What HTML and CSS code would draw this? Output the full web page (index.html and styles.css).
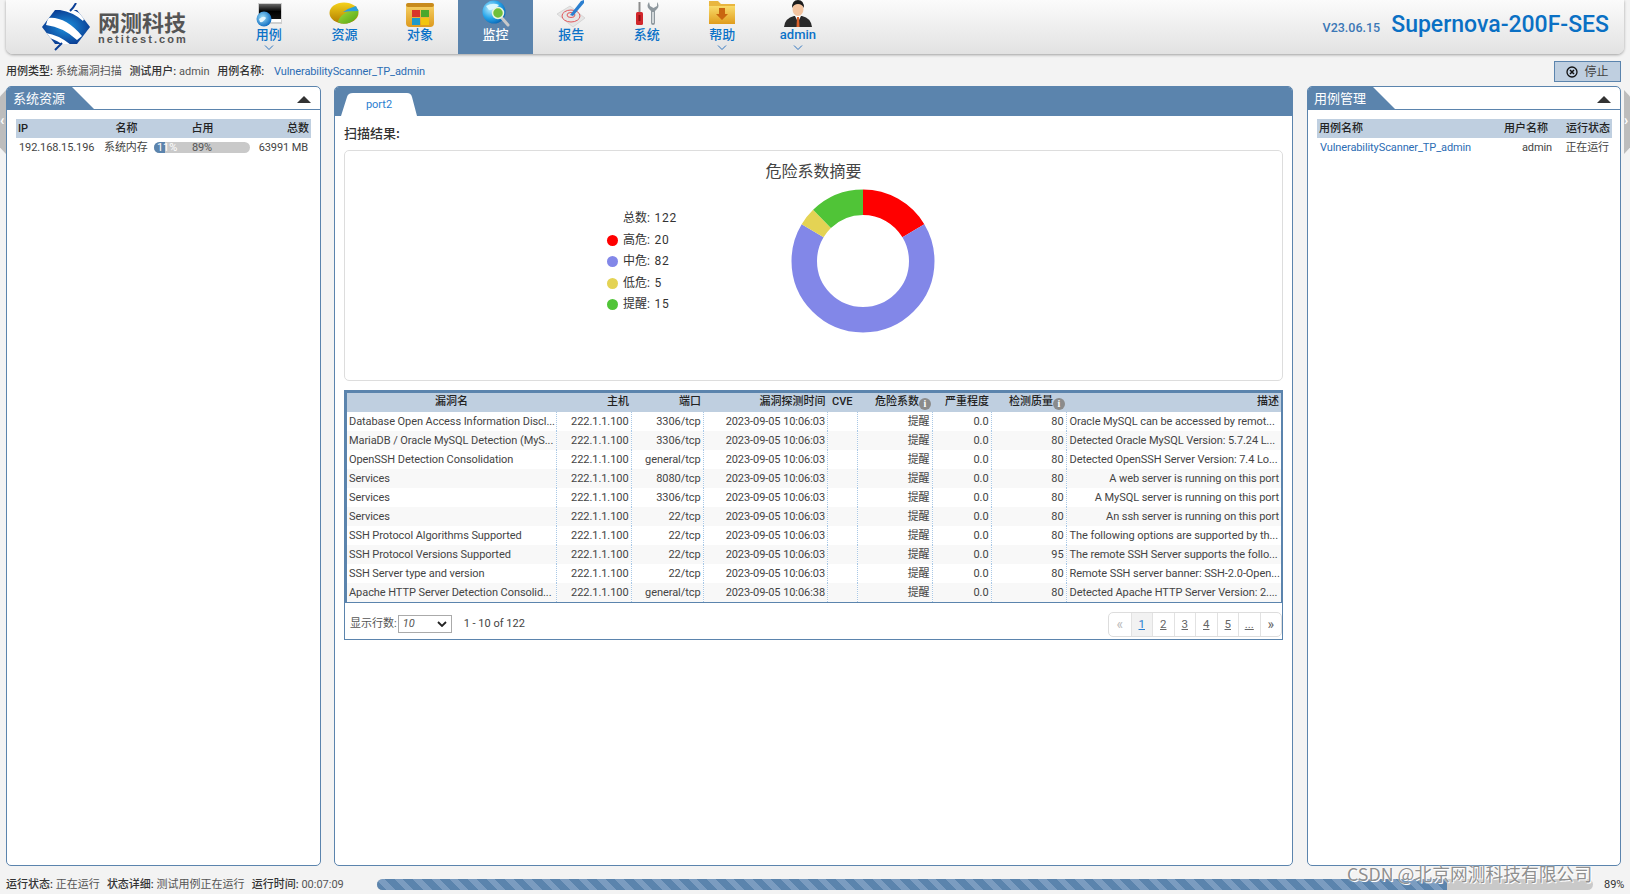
FILE: index.html
```html
<!DOCTYPE html>
<html lang="zh">
<head>
<meta charset="utf-8">
<title>Supernova-200F-SES</title>
<link rel="stylesheet" href="styles.css">
</head>
<body>
<header class="topbar">
  <div class="logo">
    <svg class="logo-mark" viewBox="0 0 50 48" width="50" height="48">
      <defs>
        <radialGradient id="lg" cx="50%" cy="50%" r="55%"><stop offset="0" stop-color="#1c93e0"/><stop offset="1" stop-color="#0a3a90"/></radialGradient>
        <clipPath id="hex"><path d="M14 7 L36 7 L49 24 L36 41 L14 41 L1 24 Z"/></clipPath>
      </defs>
      <path d="M14 7 L36 7 L49 24 L36 41 L14 41 L1 24 Z" fill="url(#lg)"/>
      <g clip-path="url(#hex)" fill="#fff">
        <path d="M7 15 Q24 13 41 33 L36 37 Q22 24 5 22 Z"/>
        <path d="M19 7 Q32 9 42 18 L44 14 Q36 8 30 6 Z"/>
        <path d="M5 30 Q18 32 30 42 L22 42 Q14 36 5 34 Z"/>
      </g>
      <path d="M29 8 Q33 4 35 0 M14 47 Q18 43 21 40" stroke="#0b3f96" stroke-width="2" fill="none"/>
    </svg>
    <div class="logo-text">
      <div class="logo-cn">网测科技</div>
      <div class="logo-en">netitest.com</div>
    </div>
  </div>
  <nav class="nav">
    <a class="nav-item">
      <svg class="nav-icon" viewBox="0 0 30 28" width="30" height="28">
        <defs>
          <linearGradient id="scr" x1="0" y1="0" x2="0" y2="1"><stop offset="0" stop-color="#666"/><stop offset="0.5" stop-color="#000"/><stop offset="1" stop-color="#111"/></linearGradient>
          <radialGradient id="glb" cx="40%" cy="40%" r="60%"><stop offset="0" stop-color="#9fe0fa"/><stop offset="1" stop-color="#1572c4"/></radialGradient>
        </defs>
        <rect x="4" y="3" width="24" height="21" fill="#cfcfcf"/>
        <rect x="5" y="4" width="22" height="15" fill="url(#scr)"/>
        <rect x="12" y="19" width="15" height="3" fill="#fff"/>
        <circle cx="10" cy="19" r="7.500" fill="url(#glb)"/>
        <path d="M5 19 Q10 15 12 18 Q9 23 6 22Z" fill="#e4f6fd"/>
      </svg>
      <span class="nav-label">用例</span>
      <svg class="chev" viewBox="0 0 10 5" width="10" height="5"><path d="M1 .5 L5 4.5 L9 .5" fill="none" stroke="#2f74c0"/></svg>
    </a>
    <a class="nav-item">
      <svg class="nav-icon" viewBox="0 0 30 28" width="30" height="28">
        <defs>
          <linearGradient id="py" x1="0" y1="0" x2="0" y2="1"><stop offset="0" stop-color="#f5d21a"/><stop offset="1" stop-color="#b07c00"/></linearGradient>
          <linearGradient id="pg" x1="0" y1="0" x2="1" y2="1"><stop offset="0" stop-color="#a8dc3a"/><stop offset="1" stop-color="#4fa514"/></linearGradient>
        </defs>
        <ellipse cx="15" cy="13" rx="14.500" ry="10.500" fill="url(#py)"/>
        <path d="M9 22 Q11 12 29 9 Q31 18 20 23 Q13 25 9 22Z" fill="url(#pg)"/>
        <path d="M14 12 Q20 8 27 6 L29.500 11 Q21 11 14 12Z" fill="#2a9fdc"/>
      </svg>
      <span class="nav-label">资源</span>
    </a>
    <a class="nav-item">
      <svg class="nav-icon" viewBox="0 0 30 28" width="30" height="28">
        <defs>
          <linearGradient id="fd" x1="0" y1="0" x2="0" y2="1"><stop offset="0" stop-color="#f8d56a"/><stop offset="1" stop-color="#dd9a1e"/></linearGradient>
        </defs>
        <rect x="1" y="3" width="28" height="24" rx="4" fill="url(#fd)"/>
        <rect x="1" y="3" width="28" height="4" rx="2" fill="#c88a1c"/>
        <rect x="7" y="10" width="8" height="7" fill="#d9352a"/>
        <rect x="16" y="10" width="8" height="7" fill="#4aa82c"/>
        <rect x="7" y="18" width="8" height="7" fill="#1f9ac9"/>
        <rect x="16" y="18" width="8" height="7" fill="#f2c511"/>
      </svg>
      <span class="nav-label">对象</span>
    </a>
    <a class="nav-item is-active">
      <svg class="nav-icon" viewBox="0 0 30 28" width="30" height="28">
        <defs>
          <radialGradient id="glm" cx="35%" cy="35%" r="70%"><stop offset="0" stop-color="#bdeeff"/><stop offset="0.6" stop-color="#27a5ea"/><stop offset="1" stop-color="#0a6ab8"/></radialGradient>
        </defs>
        <circle cx="13" cy="12" r="11.500" fill="url(#glm)"/>
        <path d="M5 6 Q12 2 18 5 Q14 10 8 10Z" fill="#d8f6ff"/>
        <path d="M20 17 L27 25" stroke="#c9c9c9" stroke-width="3" stroke-linecap="round"/>
        <circle cx="17" cy="13" r="5.500" fill="#6fbf3b" stroke="#e8f4e0" stroke-width="1.500"/>
      </svg>
      <span class="nav-label">监控</span>
    </a>
    <a class="nav-item">
      <svg class="nav-icon" viewBox="0 0 30 28" width="30" height="28">
        <path d="M1 14 L14 6 L29 18 L17 27 Z" fill="#e6e6e6" stroke="#c8c8c8" stroke-width=".6"/>
        <ellipse cx="15" cy="16" rx="9" ry="6" fill="none" stroke="#e2585c" stroke-width="1"/>
        <ellipse cx="15" cy="15" rx="4" ry="2.500" fill="none" stroke="#e2585c" stroke-width="1"/>
        <path d="M14 15 L25 1 L28 0 L28 3 L17 16 Z" fill="#2b7fd0"/>
      </svg>
      <span class="nav-label">报告</span>
    </a>
    <a class="nav-item">
      <svg class="nav-icon" viewBox="0 0 30 28" width="30" height="28">
        <rect x="6.500" y="2" width="2" height="11" fill="#8d8d8d"/>
        <rect x="4" y="12" width="7" height="13" rx="1.500" fill="#d2272c"/>
        <rect x="6.500" y="15" width="2" height="6" fill="#8f1014"/>
        <path d="M17 2 Q14 6 17 9 L19 11 L19 23 Q19 25 21 25 Q23 25 23 23 L23 11 L25 9 Q28 6 25 2 L25 6 L21.500 8 L18 6 Z" fill="#8e979d"/>
        <rect x="20.200" y="12" width="1.600" height="11" fill="#e3e6e8"/>
      </svg>
      <span class="nav-label">系统</span>
    </a>
    <a class="nav-item">
      <svg class="nav-icon" viewBox="0 0 30 28" width="30" height="28">
        <defs>
          <linearGradient id="fh" x1="0" y1="0" x2="0" y2="1"><stop offset="0" stop-color="#f9db6b"/><stop offset="1" stop-color="#e09c1c"/></linearGradient>
        </defs>
        <path d="M2 1 L11 1 L14 4 L28 4 L28 7 L2 7Z" fill="#e9b63f"/>
        <rect x="2" y="6" width="26" height="18" fill="url(#fh)"/>
        <path d="M12 8 L18 8 L18 14 L21 14 L15 20 L9 14 L12 14Z" fill="#c9660f"/>
      </svg>
      <span class="nav-label">帮助</span>
      <svg class="chev" viewBox="0 0 10 5" width="10" height="5"><path d="M1 .5 L5 4.5 L9 .5" fill="none" stroke="#2f74c0"/></svg>
    </a>
    <a class="nav-item">
      <svg class="nav-icon" viewBox="0 0 30 28" width="30" height="28">
        <path d="M1 27 Q2 18 11 16 L19 16 Q28 18 29 27Z" fill="#2a2a2a"/>
        <path d="M12 16 L18 16 L15 22Z" fill="#fff"/>
        <path d="M14 17 L16 17 L16.500 27 L13.500 27Z" fill="#d9602b"/>
        <ellipse cx="15" cy="9" rx="5.500" ry="7" fill="#f3c4a0"/>
        <path d="M9 8 Q9 0 15 0 Q21 0 21 8 Q19 4 15 4 Q11 4 9 8Z" fill="#1c1c1c"/>
      </svg>
      <span class="nav-label">admin</span>
      <svg class="chev" viewBox="0 0 10 5" width="10" height="5"><path d="M1 .5 L5 4.5 L9 .5" fill="none" stroke="#2f74c0"/></svg>
    </a>
  </nav>
  <div class="brand">
    <span class="version">V23.06.15</span>
    <span class="product">Supernova-200F-SES</span>
  </div>
</header>

<div class="subbar">
  <div class="subinfo">
    <b>用例类型:</b> 系统漏洞扫描
    <b class="gap">测试用户:</b> admin
    <b class="gap">用例名称:</b>
    <a class="link link-case">VulnerabilityScanner_TP_admin</a>
  </div>
  <button class="stop">
    <svg viewBox="0 0 12 12" width="12" height="12"><circle cx="6" cy="6" r="5" fill="none" stroke="#111" stroke-width="1.300"/><path d="M4 4 L8 8 M8 4 L4 8" stroke="#111" stroke-width="1.500"/></svg>
    停止
  </button>
</div>

<main class="main">
  <div class="edge edge-left"><span>‹</span></div>
  <div class="edge edge-right"><span>›</span></div>

  <section class="panel side side-left">
    <div class="side-head">
      <h2 class="side-title">系统资源</h2>
      <span class="collapse"></span>
    </div>
    <table class="mini">
      <colgroup><col class="c-ip"><col class="c-name"><col class="c-use"><col class="c-total"></colgroup>
      <thead><tr><th class="left">IP</th><th class="mid-head">名称</th><th class="mid-head">占用</th><th class="right">总数</th></tr></thead>
      <tbody>
        <tr>
          <td>192.168.15.196</td>
          <td class="center">系统内存</td>
          <td><div class="meter"><div class="meter-used" style="width:11%"><span>11%</span></div><span class="meter-free">89%</span></div></td>
          <td class="right">63991 MB</td>
        </tr>
      </tbody>
    </table>
  </section>

  <section class="panel center-panel">
    <div class="tabs"><div class="tab">port2</div></div>
    <div class="center-body">
      <div class="scan-title">扫描结果:</div>
      <div class="chart-box">
        <div class="chart-title">危险系数摘要</div>
        <div class="chart-row">
          <ul class="legend">
            <li><i class="dot none"></i><b>总数:</b> 122</li>
            <li><i class="dot high"></i><b>高危:</b> 20</li>
            <li><i class="dot mid"></i><b>中危:</b> 82</li>
            <li><i class="dot low"></i><b>低危:</b> 5</li>
            <li><i class="dot info"></i><b>提醒:</b> 15</li>
          </ul>
          <svg class="donut" viewBox="0 0 144 144" width="144" height="144">
            <g fill="none" stroke-width="25.500" transform="rotate(-90 72 72)">
              <circle cx="72" cy="72" r="58.750" stroke="#ff0000" pathLength="122" stroke-dasharray="20 102"/>
              <circle cx="72" cy="72" r="58.750" stroke="#8287e8" pathLength="122" stroke-dasharray="82 40" stroke-dashoffset="-20"/>
              <circle cx="72" cy="72" r="58.750" stroke="#e4d354" pathLength="122" stroke-dasharray="5 117" stroke-dashoffset="-102"/>
              <circle cx="72" cy="72" r="58.750" stroke="#50c437" pathLength="122" stroke-dasharray="15 107" stroke-dashoffset="-107"/>
            </g>
          </svg>
        </div>
      </div>

      <div class="grid-box">
        <table class="grid">
          <colgroup>
            <col class="g1"><col class="g2"><col class="g3"><col class="g4"><col class="g5"><col class="g6"><col class="g7"><col class="g8"><col class="g9">
          </colgroup>
          <thead>
            <tr>
              <th class="center">漏洞名</th><th>主机</th><th>端口</th><th>漏洞探测时间</th><th class="center">CVE</th>
              <th class="has-i">危险系数<i class="info-i">i</i></th><th>严重程度</th><th class="has-i">检测质量<i class="info-i">i</i></th><th>描述</th>
            </tr>
          </thead>
          <tbody>
            <tr><td class="left">Database Open Access Information Discl...</td><td>222.1.1.100</td><td>3306/tcp</td><td>2023-09-05 10:06:03</td><td></td><td>提醒</td><td>0.0</td><td>80</td><td class="left">Oracle MySQL can be accessed by remot...</td></tr>
            <tr><td class="left">MariaDB / Oracle MySQL Detection (MyS...</td><td>222.1.1.100</td><td>3306/tcp</td><td>2023-09-05 10:06:03</td><td></td><td>提醒</td><td>0.0</td><td>80</td><td class="left">Detected Oracle MySQL Version: 5.7.24 L...</td></tr>
            <tr><td class="left">OpenSSH Detection Consolidation</td><td>222.1.1.100</td><td>general/tcp</td><td>2023-09-05 10:06:03</td><td></td><td>提醒</td><td>0.0</td><td>80</td><td class="left">Detected OpenSSH Server Version: 7.4 Lo...</td></tr>
            <tr><td class="left">Services</td><td>222.1.1.100</td><td>8080/tcp</td><td>2023-09-05 10:06:03</td><td></td><td>提醒</td><td>0.0</td><td>80</td><td>A web server is running on this port</td></tr>
            <tr><td class="left">Services</td><td>222.1.1.100</td><td>3306/tcp</td><td>2023-09-05 10:06:03</td><td></td><td>提醒</td><td>0.0</td><td>80</td><td>A MySQL server is running on this port</td></tr>
            <tr><td class="left">Services</td><td>222.1.1.100</td><td>22/tcp</td><td>2023-09-05 10:06:03</td><td></td><td>提醒</td><td>0.0</td><td>80</td><td>An ssh server is running on this port</td></tr>
            <tr><td class="left">SSH Protocol Algorithms Supported</td><td>222.1.1.100</td><td>22/tcp</td><td>2023-09-05 10:06:03</td><td></td><td>提醒</td><td>0.0</td><td>80</td><td class="left">The following options are supported by th...</td></tr>
            <tr><td class="left">SSH Protocol Versions Supported</td><td>222.1.1.100</td><td>22/tcp</td><td>2023-09-05 10:06:03</td><td></td><td>提醒</td><td>0.0</td><td>95</td><td class="left">The remote SSH Server supports the follo...</td></tr>
            <tr><td class="left">SSH Server type and version</td><td>222.1.1.100</td><td>22/tcp</td><td>2023-09-05 10:06:03</td><td></td><td>提醒</td><td>0.0</td><td>80</td><td class="left">Remote SSH server banner: SSH-2.0-Open...</td></tr>
            <tr><td class="left">Apache HTTP Server Detection Consolid...</td><td>222.1.1.100</td><td>general/tcp</td><td>2023-09-05 10:06:38</td><td></td><td>提醒</td><td>0.0</td><td>80</td><td class="left">Detected Apache HTTP Server Version: 2....</td></tr>
          </tbody>
        </table>
        <div class="pager-row">
          <span class="rows-label">显示行数:</span>
          <span class="select"><em>10</em><svg viewBox="0 0 10 6" width="10" height="6"><path d="M1 1 L5 5 L9 1" fill="none" stroke="#222" stroke-width="1.800"/></svg></span>
          <span class="range">1 - 10 of 122</span>
          <div class="pager">
            <a class="pg muted">«</a><a class="pg active">1</a><a class="pg">2</a><a class="pg">3</a><a class="pg">4</a><a class="pg">5</a><a class="pg">...</a><a class="pg plain">»</a>
          </div>
        </div>
      </div>
    </div>
  </section>

  <section class="panel side">
    <div class="side-head">
      <h2 class="side-title">用例管理</h2>
      <span class="collapse"></span>
    </div>
    <table class="mini mini-right">
      <colgroup><col class="r-name"><col class="r-user"><col class="r-state"></colgroup>
      <thead><tr><th class="left">用例名称</th><th class="right user-head">用户名称</th><th class="right">运行状态</th></tr></thead>
      <tbody>
        <tr>
          <td><a class="link">VulnerabilityScanner_TP_admin</a></td>
          <td class="right user-cell">admin</td>
          <td class="right">正在运行</td>
        </tr>
      </tbody>
    </table>
  </section>
</main>

<footer class="statusbar">
  <div class="status-text">
    <b>运行状态:</b> 正在运行
    <b class="gap">状态详细:</b> 测试用例正在运行
    <b class="gap">运行时间:</b> 00:07:09
  </div>
  <div class="progress"><div class="progress-fill" style="width:88%"></div></div>
  <span class="progress-num">89%</span>
</footer>
<div class="watermark">CSDN @北京网测科技有限公司</div>
</body>
</html>
```

FILE: styles.css
```css
* { box-sizing: border-box; }
html, body { margin: 0; height: 894px; overflow: hidden; }
body {
  background: #f3f3f3;
  font-family: Roboto, "Noto Sans CJK SC", sans-serif;
  font-size: 11px;
  line-height: 14px;
  color: #444;
  display: flex;
  flex-direction: column;
  position: relative;
}
b { font-weight: 500; color: #333; }
.link { color: #2c6db4; letter-spacing: -.1px; }

/* top bar */
.topbar {
  flex: none;
  height: 54px;
  margin: 0 6px;
  display: flex;
  align-items: flex-start;
  background: linear-gradient(#fbfbfb, #e2e2e2);
  border-radius: 0 0 7px 7px;
  box-shadow: 0 1px 3px rgba(0,0,0,.35);
}
.logo { width: 225px; height: 54px; padding: 0 0 0 35px; display: flex; align-items: center; gap: 7px; flex: none; }
.logo-mark { flex: none; }
.logo-text { color: #555; }
.logo-cn { font: 700 22px/24px "Noto Sans CJK SC", sans-serif; }
.logo-en { font: 700 11px/12px "Liberation Sans", sans-serif; letter-spacing: 2.1px; }
.nav { display: flex; flex: none; }
.nav-item {
  width: 75.600px;
  height: 54px;
  display: flex;
  flex-direction: column;
  align-items: center;
  color: #0b72c8;
}
.nav-icon { flex: none; margin-bottom: -1px; }
.nav-label { font: 500 13px/15px Roboto, "Noto Sans CJK SC", sans-serif; }
.chev { margin-top: 3px; flex: none; }
.nav-item.is-active { background: #5b84ad; color: #fff; }
.brand { margin-left: auto; height: 54px; padding: 11px 15px 0 0; display: flex; align-items: baseline; gap: 11px; }
.version { font: 500 12.500px/16px Roboto, sans-serif; color: #3b77b6; }
.product { font: 500 23px/28px Roboto, sans-serif; color: #0a70c4; }

/* sub bar */
.subbar { flex: none; height: 32px; padding: 7px 9px 4px 6px; display: flex; justify-content: space-between; align-items: flex-start; }
.subinfo { line-height: 22px; white-space: nowrap; color: #555; }
.gap { margin-left: 5px; }
.link-case { margin-left: 7px; }
.stop {
  width: 67px;
  height: 21px;
  margin: 0;
  padding: 0;
  border: 1px solid #5b84ad;
  background: #bfcfe0;
  display: flex;
  align-items: center;
  justify-content: center;
  gap: 6px;
  color: #444;
  font: 12px/14px Roboto, "Noto Sans CJK SC", sans-serif;
}

/* main */
.main { flex: 1; min-height: 0; padding: 0 9px 0 6px; display: flex; gap: 14px; position: relative; }
.panel { background: #fff; border: 1px solid #5b84ad; border-radius: 5px; overflow: hidden; }
.side { width: 314px; flex: none; }
.side-left { width: 315px; margin-right: -1px; }
.side-head { height: 23px; border-bottom: 1px solid #5b84ad; position: relative; margin-bottom: 9px; }
.side-title {
  margin: 0;
  width: 87px;
  height: 22px;
  padding: 0 0 0 6px;
  font: 400 13px/22px "Noto Sans CJK SC", sans-serif;
  color: #fff;
  background: #5b84ad;
  clip-path: polygon(0 0, 65px 0, 87px 22px, 0 22px);
}
.collapse {
  position: absolute;
  right: 9px;
  top: 9px;
  border-left: 7px solid transparent;
  border-right: 7px solid transparent;
  border-bottom: 7px solid #333;
}
.mini { width: 295px; margin-left: 9px; border-collapse: collapse; table-layout: fixed; }
.mini th { height: 19px; background: #bfcfe0; color: #222; font-weight: 500; padding: 0 2px; text-align: center; }
.mini td { height: 18px; padding: 1px 3px 0; white-space: nowrap; letter-spacing: -.1px; }
.mini .left { text-align: left; }
.mini .right { text-align: right; }
.mini .center { text-align: center; }
.mini .mid-head { padding-left: 4px; }
.mini .user-head { padding-right: 10px; }
.mini .user-cell { padding-right: 6px; }
.c-ip { width: 85px; }
.c-name { width: 49px; }
.c-use { width: 103px; }
.c-total { width: 58px; }
.r-name { width: 179px; }
.r-user { width: 62px; }
.r-state { width: 54px; }
.meter { position: relative; height: 11px; width: 96px; margin-left: 1px; background: #c9c9c9; border-radius: 6px; overflow: hidden; line-height: 11px; }
.meter-used { height: 100%; background: #5b84ad; color: #fff; }
.meter-used span { margin-left: 3px; }
.meter-free { position: absolute; left: 0; right: 0; top: 0; text-align: center; color: #555; }

.edge { position: absolute; top: 4px; width: 6px; height: 64px; background: #bdbdbd; color: #fff; font: 700 14px/60px Roboto, sans-serif; overflow: hidden; }
.edge-left { left: 0; clip-path: polygon(100% 0, 100% 100%, 0 90%, 0 10%); }
.edge-right { right: 0; clip-path: polygon(0 0, 100% 10%, 100% 90%, 0 100%); }

/* center */
.center-panel { flex: 1; min-width: 0; }
.tabs { height: 29px; background: #5b84ad; padding: 6px 0 0 6px; }
.tab {
  width: 76px;
  height: 23px;
  background: #fff;
  color: #2a7ed0;
  text-align: center;
  line-height: 24px;
  clip-path: path("M0 23 L6 4 Q7 0 12 0 L66 0 Q70 0 71 4 L76 23 Z");
}
.center-body { padding: 0 9px; }
.scan-title { height: 34px; font: 500 13px/34px "Noto Sans CJK SC", sans-serif; color: #333; }
.chart-box { height: 231px; border: 1px solid #ddd; border-radius: 5px; }
.chart-title { text-align: center; font: 400 16px/22px "Noto Sans CJK SC", sans-serif; color: #444; padding-top: 8px; height: 33px; }
.chart-row { display: flex; align-items: flex-start; }
.legend { list-style: none; margin: 24px 0 0 262px; padding: 0; width: 184px; flex: none; font-size: 12px; letter-spacing: .7px; }
.legend li { height: 21.500px; line-height: 21.500px; display: flex; align-items: center; white-space: pre; color: #333; }
.legend b { font-weight: 400; letter-spacing: 0; margin-right: 1px; }
.dot { width: 11px; height: 11px; border-radius: 50%; margin-right: 5px; flex: none; }
.dot.none { background: transparent; }
.dot.high { background: #ff0000; }
.dot.mid { background: #8287e8; }
.dot.low { background: #e4d354; }
.dot.info { background: #50c437; }
.donut { flex: none; margin: 5px 0 0 0; }

.grid-box { margin-top: 9px; height: 250px; border: 1px solid #5b84ad; }
.grid { width: 937px; border-collapse: collapse; table-layout: fixed; border: 1px solid #5b84ad; border-top-width: 2px; border-left-width: 2px; border-right-width: 2px; }
.g1 { width: 210px; } .g2 { width: 75px; } .g3 { width: 72px; } .g4 { width: 124.500px; } .g5 { width: 29.500px; }
.g6 { width: 75px; } .g7 { width: 59px; } .g8 { width: 75px; } .g9 { width: 216px; }
.grid th { height: 20px; padding: 0 2px 1px; background: #bfcfe0; color: #222; font-weight: 500; text-align: right; white-space: nowrap; }
.grid th.center { text-align: center; }
.grid th.has-i { padding-right: 1px; }
.grid td { height: 19px; padding: 0 2px 0 3px; text-align: right; white-space: nowrap; overflow: hidden; letter-spacing: -.07px; border-left: 1px dotted #a9c8e6; }
.grid td:first-child { border-left: 0; padding-left: 2px; }
.grid td.left { text-align: left; }
.grid tbody tr:nth-child(even) td { background: #f8f8f8; }
.grid tbody tr:last-child td { padding-top: 1px; }
.info-i { display: inline-block; width: 12px; height: 12px; border-radius: 50%; background: #8b8b8b; color: #fff; font: 700 10px/12px "Liberation Serif", serif; text-align: center; vertical-align: -2px; }
.pager-row { height: 37px; display: flex; align-items: center; padding: 6px 0 0 5px; }
.rows-label { color: #555; }
.select { width: 54px; height: 18px; margin-left: 1px; border: 1px solid #aaa; display: flex; align-items: center; justify-content: space-between; padding: 0 4px; }
.select em { font-style: italic; color: #555; }
.range { margin-left: 12px; }
.pager { margin-left: auto; height: 25px; display: flex; border: 1px solid #ddd; border-radius: 5px; overflow: hidden; }
.pg { width: 21.500px; display: block; text-align: center; line-height: 23px; font-size: 11.500px; color: #666; text-decoration: underline; border-left: 1px solid #e2e2e2; }
.pg:first-child { border-left: 0; }
.pg.muted { color: #bbb; text-decoration: none; font-size: 14px; }
.pg.plain { text-decoration: none; font-size: 14px; }
.pg.active { background: #f2f2f2; color: #2a7ed0; }

/* status bar */
.statusbar { flex: none; height: 28px; padding: 0 0 0 6px; display: flex; align-items: center; position: relative; }
.status-text { width: 371px; flex: none; white-space: nowrap; color: #555; padding-top: 9px; }
.status-text .gap { margin-left: 4.500px; }
.progress { width: 1216px; height: 11px; margin-top: 9px; border-radius: 6px; background: #c9c9c9; overflow: hidden; flex: none; }
.progress-fill { height: 100%; background: repeating-linear-gradient(45deg, #5b84ad 0 7px, #7b9cc0 7px 13px); }
.progress-num { margin: 10px 0 0 11px; color: #333; }
.watermark {
  position: absolute;
  left: 1347px;
  top: 862px;
  font: 400 17.800px/22px "Noto Sans CJK SC", sans-serif;
  color: #8f8f8f;
  text-shadow: 0 0 2px #fff, 1px 1px 0 #fff;
  white-space: nowrap;
}
```
